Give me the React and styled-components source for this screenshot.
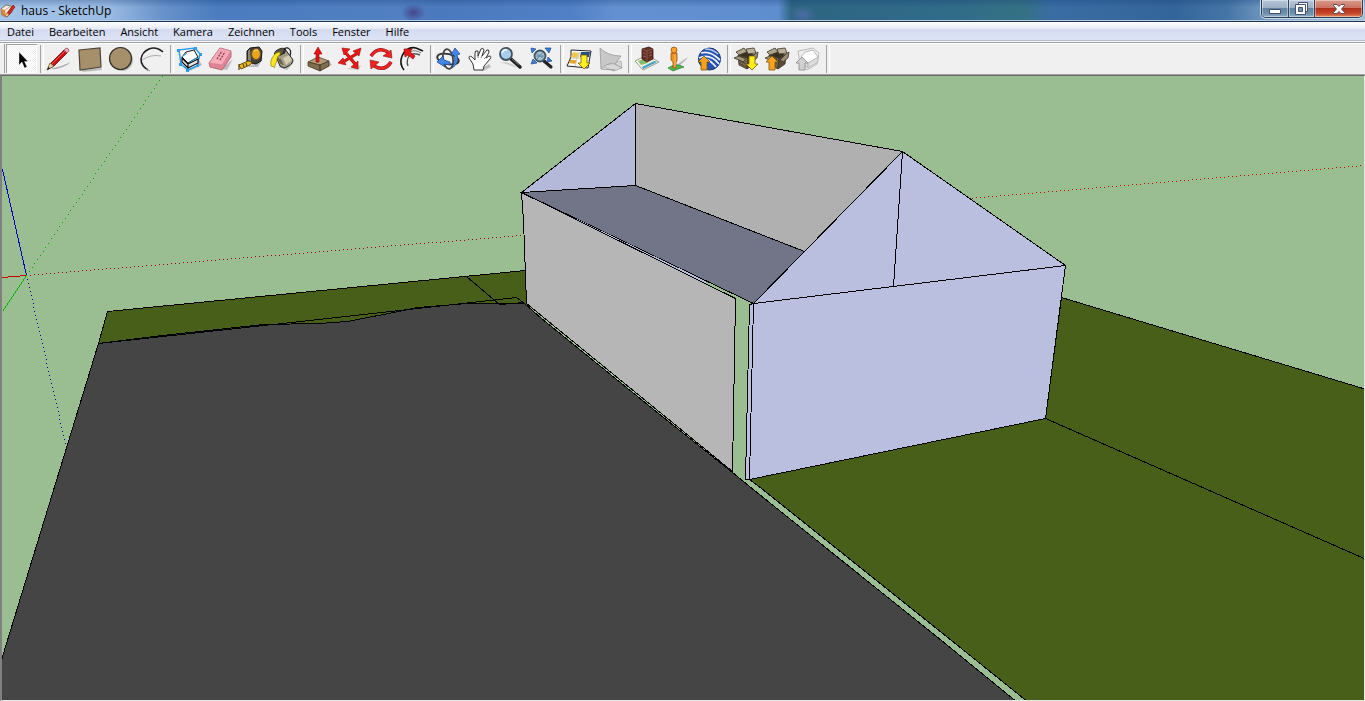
import React, { useState } from 'react';
import styled, { createGlobalStyle, css } from 'styled-components';

const GlobalStyle = createGlobalStyle`
  * {
    box-sizing: border-box;
  }

  body {
    margin: 0;
    font-family: 'Open Sans', 'Noto Sans', sans-serif;
    font-size: 11px;
    color: #000;
    background: #f0f0f0;
  }

  button {
    font: inherit;
    color: inherit;
    padding: 0;
    border: 0;
    background: none;
  }
`;

const Window = styled.div`
  display: flex;
  flex-direction: column;
  height: 100vh;
  overflow: hidden;
`;

const TitleBar = styled.header`
  display: flex;
  flex: none;
  align-items: flex-start;
  height: 22px;
  border-bottom: 1px solid #1f3553;
  box-shadow: inset 0 -1px 0 #b3cbe3;
  background:
    linear-gradient(rgba(20, 60, 120, 0.3), transparent 35%),
    radial-gradient(ellipse 12px 9px at 30.3% 60%, rgba(64, 48, 120, 0.7), transparent),
    radial-gradient(ellipse 14px 10px at 58.8% 70%, rgba(90, 110, 180, 0.7), transparent),
    linear-gradient(
      90deg,
      #a5c4e8 0%,
      #9abbe2 8%,
      #6791ca 12%,
      #4a7cbf 16%,
      #517fc1 29%,
      #4b79bd 32%,
      #5180c6 42%,
      #6390d0 45%,
      #5f8ecf 57%,
      #2d6580 58%,
      #306b88 69%,
      #347183 75%,
      #3a6da3 77%,
      #34659a 86%,
      #4676a8 90%,
      #86a9ca 94%,
      #a6c0d8 100%
    );
`;

const Title = styled.h1`
  display: flex;
  align-items: center;
  gap: 5px;
  margin: 0;
  height: 21px;
  font-size: 12px;
  font-weight: 400;
  white-space: nowrap;
`;

const WindowControls = styled.div`
  display: flex;
  height: 18px;
  margin: 0 2px 0 auto;
  border: 1px solid #2d3d52;
  border-top: 0;
  border-radius: 0 0 5px 5px;
  overflow: hidden;
  box-shadow: 0 0 0 1px #c5d8e8;
`;

const ControlButton = styled.button`
  display: flex;
  align-items: center;
  justify-content: center;
  width: ${props => (props.$close ? '48px' : '26px')};
  border-left: 1px solid #34445a;
  box-shadow: inset 0 0 0 1px rgba(255, 255, 255, 0.4);
  background: ${props => props.$close
    ? 'linear-gradient(#d99a8b, #cd7361 45%, #b02f18 50%, #c9492b 80%, #e08c65)'
    : 'linear-gradient(#b7c7d7, #9db1c6 45%, #6383a2 50%, #6e8fad 80%, #94b1c8)'};

  &:first-child {
    border-left: 0;
  }
`;

const MenuBar = styled.nav`
  display: flex;
  flex: none;
  gap: 15px;
  height: 20px;
  padding: 0 7px;
  align-items: center;
  border-bottom: 1px solid #f5f5f8;
  box-shadow: inset 0 -1px 0 #b6bccc;
  background: linear-gradient(#fff, #e6eaf5 36%, #d4dbef 37%, #dee4f6);
`;

const MenuItem = styled.button`
  height: 19px;
  line-height: 19px;
`;

const ToolBar = styled.div`
  display: flex;
  flex: none;
  height: 33px;
  padding: 1px 0 1px 4px;
  border-top: 1px solid #a0a0a0;
  border-bottom: 1px solid #a0a0a0;
  box-shadow: inset 0 1px 0 #fff;
  background: #f0f0f0;
`;

const Grip = styled.div`
  width: 2px;
  border-left: 1px solid #a0a0a0;
`;

const Separator = styled.div`
  width: 6px;
  padding-left: 3px;

  &::before {
    content: '';
    display: block;
    width: 2px;
    height: 28px;
    margin-top: 1px;
    border-left: 1px solid #a0a0a0;
    border-right: 1px solid #fff;
  }
`;

const ToolButton = styled.button`
  width: 31px;
  height: 29px;

  svg {
    display: block;
  }

  ${props => props.$active && css`
    box-shadow: inset 1px 1px 0 #a0a0a0, inset -1px -1px 0 #fff;
    background: repeating-conic-gradient(#fff 0 25%, #f0f0f0 0 50%) 0 0 / 2px 2px;
  `}
`;

const Viewport = styled.main`
  flex: 1;
  min-height: 0;
  border: solid;
  border-width: 1px 1px 1px 2px;
  border-color: #696969 #e8e8e8 #e8e8e8 #808080;
  background: #9bbd92;

  svg {
    display: block;
    width: 100%;
    height: 100%;
  }
`;

const Icon = ({ children }) => (
  <svg width="31" height="28" viewBox="0 0 31 28" fill="none" aria-hidden="true">
    {children}
  </svg>
);

const BigArrow = ({ x, y, down, fill }) => (
  <path
    transform={`translate(${x} ${y}) scale(1 ${down ? -1 : 1})`}
    d="M0-7L6-1H3V7H-3V-1H-6Z"
    fill={fill}
    stroke="#7a5a10"
    strokeWidth=".8"
  />
);

const OpenBox = () => (
  <g stroke="#3a3226" strokeWidth=".8">
    <path d="M8 10L18 13L17 24L9 20Z" fill="#75664e" />
    <path d="M18 13L25 10L24 19L17 24Z" fill="#594b37" />
    <path d="M9 10L16 7L24 10L18 13Z" fill="#39301f" />
    <path d="M6 7L14 3L17 7L9 10Z" fill="#b0a58d" />
    <path d="M16 4L24 3L26 8L18 9Z" fill="#bdb299" />
    <path d="M4 13L9 11L16 14L13 17Z" fill="#a1957c" />
    <path d="M19 15L25 9L28 7L27 13L22 17Z" fill="#9a8d73" />
    <path d="M9 15L16 19M9 18L16 22" stroke="#4b3f2e" />
  </g>
);

const icons = {
  select: <path d="M13 7V20L16 17L18.5 23L21 22L18.5 16.500H22Z" fill="#000" stroke="#fff" strokeWidth=".4" />,
  pencil: (
    <>
      <path d="M7 24Q18 22 28 17L24 20Q15 25 7 24Z" fill="#aaa" />
      <path d="M5 24L8 18L21 5L24 8L11 21Z" fill="#d01010" stroke="#521010" strokeWidth=".8" />
      <path d="M9 19L22 6" stroke="#ff5555" />
      <path d="M21 5L23 3Q26 3 26 6L24 8Z" fill="#f3a4b5" stroke="#8a5560" strokeWidth=".7" />
      <path d="M4 25L7 18L11 21Z" fill="#ecd3a0" stroke="#594426" strokeWidth=".7" />
      <path d="M4 25L5.500 22L7 23.500Z" fill="#111" />
    </>
  ),
  rectangle: (
    <>
      <path d="M7 25L27 23L28 25L9 27Z" fill="#bbb" />
      <path d="M5 5L26 3L27 22L6 25Z" fill="#a68f6b" stroke="#4c4436" strokeWidth="1.200" />
    </>
  ),
  circle: (
    <>
      <circle cx="17" cy="15" r="11" fill="#bbb" />
      <circle cx="15.500" cy="13.500" r="11" fill="#a68f6b" stroke="#37322b" strokeWidth="1.200" />
    </>
  ),
  arc: (
    <>
      <path d="M6 15Q15 9 25 11" stroke="#aaa" />
      <path d="M12 25Q5 21 5 14Q6 7 13 4Q20 1 27 7" stroke="#222" strokeWidth="1.600" />
      <path d="M10 24L14 26" stroke="#999" />
    </>
  ),
  component: (
    <>
      <path d="M6 18L16 26L29 20L25 14Z" fill="#b5b5b5" />
      <path d="M6 5L22 3L27 9L24 21L15 25L8 19Z" fill="#fff" stroke="#2c9cec" strokeWidth="1.500" />
      <path d="M9 13L15 19V23L9 17ZM15 19L25 14V18L15 23Z" fill="#e8e8e8" stroke="#111" strokeWidth="1.200" />
      <path d="M13 7L21 5L25 12L15 18L9 12Z" fill="#fff" stroke="#111" />
      <path d="M9 12L14 8M16 17L24 13" stroke="#2c9cec" />
      <path d="M4 4h3v3H4ZM21 2h3v3H21ZM26 8h3v3H26ZM23 19h3v3H23ZM13 24h3v3H13ZM6 18h3v3H6Z" fill="#2c9cec" />
    </>
  ),
  eraser: (
    <>
      <path d="M17 24L29 14L23 25Z" fill="#bbb" />
      <path d="M5 18L16 3L27 6V12L18 25L6 22Z" fill="#e28496" stroke="#a65566" strokeWidth=".8" />
      <path d="M5 18L16 3L27 6L18 20Z" fill="#f8abb8" stroke="#c67888" strokeWidth=".6" />
      <path d="M13 14L18 6M16 15L21 7" stroke="#93485a" strokeWidth="1.500" strokeDasharray="2 1" />
    </>
  ),
  tape: (
    <>
      <path d="M13 22L28 13L23 22Z" fill="#bbb" />
      <path d="M12 6L15 3L24 2L27 6L26 16L21 19L12 17Z" fill="#45413a" stroke="#191714" />
      <path d="M13 6L15 4L16 16L13 15Z" fill="#8d8673" />
      <ellipse cx="21" cy="9" rx="4.500" ry="5.500" fill="#eaa41d" stroke="#61502a" />
      <path d="M19 7Q20 4 23 5" stroke="#ffd46f" />
      <path d="M4 20L13 16L17 17L15 20L6 24Z" fill="#f4bd18" stroke="#664c0d" />
      <path d="M4 19V25M8 19L9 22M11 18L12 21" stroke="#554111" strokeWidth="1.200" />
    </>
  ),
  paint: (
    <>
      <path d="M12 22L28 17L21 25Z" fill="#bbb" />
      <path d="M9 9L19 4L27 15Q27 20 18 23L14 21Z" fill="#a39d87" stroke="#222" />
      <path d="M17 13L23 10L26 15L20 20Z" fill="#d2ccb2" />
      <path d="M11 11L15 19M14 14L17 20" stroke="#6b6553" strokeWidth="1.500" />
      <ellipse cx="14" cy="7" rx="6" ry="3" transform="rotate(-28 14 7)" fill="#5c563f" stroke="#222" />
      <path d="M18 9Q17 2 22 3Q26 5 24 11" stroke="#222" strokeWidth="1.300" />
      <path d="M14 7Q9 7 6 13Q4 17 5 21L8 22Q9 24 9 20Q11 17 11 14Q11 11 14 10Z" fill="#ffe51b" stroke="#8d8013" strokeWidth=".7" />
    </>
  ),
  push: (
    <>
      <path d="M17 26L29 20L26 16Z" fill="#bbb" />
      <path d="M5 17L15 12L26 16L17 20Z" fill="#b29c78" stroke="#50442e" strokeWidth=".8" />
      <path d="M5 17L17 20V26L5 21ZM17 20L26 16V21L17 26Z" fill="#806d4d" stroke="#463a27" strokeWidth=".8" />
      <path d="M15 2L19 9H16V17H13V9H11Z" fill="#ed1111" stroke="#8c0808" strokeWidth=".6" />
    </>
  ),
  move: (
    <>
      <path d="M12 24L27 20L25 25Z" fill="#ccc" />
      <path d="M11 7L22 20M24 8L9 17" stroke="#9e0808" strokeWidth="3.200" />
      <path d="M8 3L16 4L10 10ZM27 3L25 11L19 6ZM4 18L9 13L12 20ZM24 24L17 22L24 16Z" fill="#ee1717" stroke="#9e0808" strokeWidth=".6" />
      <path d="M11 7L22 20M24 8L9 17" stroke="#ee1717" strokeWidth="2" />
    </>
  ),
  rotate: (
    <>
      <path d="M6 11Q13 1 23 7" stroke="#8b1515" strokeWidth="3.500" />
      <path d="M6 11Q13 1 23 7" stroke="#f02222" strokeWidth="2.500" />
      <path d="M26 5L27 13L18 11Z" fill="#f02222" stroke="#8b1515" strokeWidth=".6" />
      <path d="M26 17Q20 27 9 21" stroke="#8b1515" strokeWidth="3.500" />
      <path d="M26 17Q20 27 9 21" stroke="#f02222" strokeWidth="2.500" />
      <path d="M5 15L14 17L6 24Z" fill="#f02222" stroke="#8b1515" strokeWidth=".6" />
    </>
  ),
  offset: (
    <>
      <path d="M8 25Q3 19 6 11Q11 1 20 3L27 6" stroke="#111" strokeWidth="1.600" />
      <path d="M12 21Q10 16 13 11Q16 7 24 10" stroke="#555" strokeWidth="1.400" />
      <path d="M14 7Q19 4 25 8" stroke="#777" />
      <path d="M8 4L16 4L14 7L19 11L17 14L12 10L9 12Z" fill="#ed1616" stroke="#8c0909" strokeWidth=".7" />
    </>
  ),
  orbit: (
    <>
      <ellipse cx="15" cy="14" rx="11" ry="5" transform="rotate(12 15 14)" stroke="#333" strokeWidth="1.800" />
      <ellipse cx="15" cy="14" rx="5" ry="10" transform="rotate(-8 15 14)" stroke="#444" strokeWidth="1.800" />
      <path d="M19 23Q23 17 21 10L18 10L22 3L27 9L24 10Q27 18 19 23Z" fill="#4187ec" stroke="#174283" strokeWidth=".7" />
      <path d="M4 17L10 11L11 15L17 17L17 20L11 19L12 22Z" fill="#4187ec" stroke="#174283" strokeWidth=".7" />
    </>
  ),
  pan: (
    <>
      <path d="M15 25L25 19L27 22L19 26Z" fill="#bbb" />
      <path d="M10 25L9 19L5 13Q5 10 8 12L11 15L11 8Q11 5 14 6L14 11L17 4Q19 2 20 5L18 11L23 5Q25 4 25 7L22 13L25 11Q28 11 26 14L20 21L19 25Z" fill="#fff" stroke="#333" />
      <path d="M14 11L14 13M18 11L17 13M22 12L20 14" stroke="#777" />
    </>
  ),
  zoom: (
    <>
      <path d="M5 17Q15 16 22 23L14 20Z" fill="#ccc" />
      <path d="M16 14L25 22" stroke="#222" strokeWidth="3.500" strokeLinecap="round" />
      <path d="M17 14L24 20" stroke="#777" />
      <circle cx="11" cy="9" r="6" fill="#a6cdec" stroke="#45515d" strokeWidth="1.800" />
      <path d="M7 8Q8 4 12 5" stroke="#e8f6ff" strokeWidth="2" />
    </>
  ),
  extents: (
    <>
      <path d="M18 16L25 22" stroke="#222" strokeWidth="3.200" strokeLinecap="round" />
      <circle cx="14" cy="11" r="5.500" fill="#9fc5d8" stroke="#44525d" strokeWidth="1.800" />
      <path d="M10 8L18 14M17 7L11 14M10 11H18" stroke="#668591" />
      <path d="M5 3L10 4L6 8ZM19 3L25 3L23 8ZM5 19L7 14L11 18ZM22 12L26 16L21 17Z" fill="#3b7ee2" stroke="#1b478b" strokeWidth=".7" />
    </>
  ),
  getView: (
    <>
      <path d="M8 5L28 6L25 23L4 21L8 12Z" fill="#fafafa" stroke="#222" />
      <path d="M10 7L17 8L15 14L8 12Z" fill="#f5c64d" />
      <path d="M18 7L27 7L26 12L17 12Z" fill="#244c7d" />
      <path d="M7 15L14 15L13 19L6 18Z" fill="#e8a62d" />
      <path d="M8 14Q15 11 25 16M16 7L12 21" stroke="#c9cfcb" />
      <BigArrow x={21} y={17} down fill="#ffee18" />
    </>
  ),
  terrain: (
    <>
      <path d="M7 21L27 16L28 23L20 26Z" fill="#d8d8d8" stroke="#aaa" strokeWidth=".8" />
      <path d="M6 3Q14 11 27 11L21 19Q14 17 7 24Z" fill="#c8c8c8" stroke="#999" strokeWidth=".8" />
      <path d="M21 19L28 23M7 24L21 25" stroke="#999" />
    </>
  ),
  building: (
    <>
      <path d="M4 16L16 10L28 17L12 25Z" fill="#f5f4df" stroke="#7d867f" strokeWidth=".8" />
      <path d="M7 16L13 14L17 18L10 20Z" fill="#86bd71" />
      <path d="M11 22L23 16L26 17L12 24Z" fill="#43a2c9" />
      <path d="M11 4L18 2L22 4V14L16 17L11 14Z" fill="#643229" stroke="#321812" strokeWidth=".8" />
      <path d="M11 4L16 6L22 4M16 6V17" stroke="#8a5044" />
      <path d="M12 8L15 9M12 11L15 12M18 8L21 7M18 11L21 10" stroke="#8f5548" />
    </>
  ),
  streetView: (
    <>
      <path d="M14 20L26 12L24 15L16 22Z" fill="#bbb" />
      <path d="M6 23L12 20L17 20L22 22L16 24L11 26Z" fill="#4cb84c" stroke="#277c30" strokeWidth=".7" />
      <path d="M9 8H15V16L14 17V23H11V17L9 15Z" fill="#f18e1d" stroke="#9c5713" strokeWidth=".8" />
      <path d="M13 9V22" stroke="#ffc35e" />
      <circle cx="12" cy="5" r="3" fill="#f7a32c" stroke="#9c5713" strokeWidth=".8" />
    </>
  ),
  earth: (
    <>
      <circle cx="16.500" cy="14" r="11" fill="#2551b3" stroke="#19336f" />
      <path d="M8 8Q17 5 27 15M6 13Q17 8 26 19M13 14Q18 16 23 22" stroke="#e8f2ff" strokeWidth="1.800" />
      <path d="M12 4Q20 4 25 9" stroke="#b4cdf2" strokeWidth="1.600" />
      <BigArrow x={11} y={18} fill="#fba01a" />
    </>
  ),
  getModels: (
    <>
      <OpenBox />
      <BigArrow x={22} y={18} down fill="#ffee18" />
    </>
  ),
  shareModel: (
    <>
      <OpenBox />
      <BigArrow x={11} y={18} fill="#fba01a" />
    </>
  ),
  shareComponent: (
    <g stroke="#bbb">
      <path d="M6 6L21 3L27 8L25 19L15 25L8 19Z" fill="#eee" />
      <path d="M9 13L16 18V23L9 18ZM16 18L26 12V17L16 23Z" fill="#ddd" />
      <path d="M13 7L21 5L26 12L16 18L9 12Z" fill="#fff" />
      <path d="M10 12L16 18H13V25H7V18H4Z" fill="#d0d0d0" stroke="#999" />
    </g>
  ),
};

const toolGroups = [
  [['select', 'Auswählen']],
  [['pencil', 'Linie'], ['rectangle', 'Rechteck'], ['circle', 'Kreis'], ['arc', 'Bogen']],
  [['component', 'Komponente erstellen'], ['eraser', 'Radiergummi'], ['tape', 'Maßband'], ['paint', 'Farbeimer']],
  [['push', 'Drücken/Ziehen'], ['move', 'Verschieben'], ['rotate', 'Drehen'], ['offset', 'Versatz']],
  [['orbit', 'Rotieren'], ['pan', 'Schwenken'], ['zoom', 'Zoom'], ['extents', 'Zoom Grenzen']],
  [['getView', 'Aktuelle Ansicht abrufen'], ['terrain', 'Gelände']],
  [['building', 'Gebäude'], ['streetView', 'Fototexturen'], ['earth', 'Google Earth']],
  [['getModels', 'Modelle abrufen'], ['shareModel', 'Modell freigeben'], ['shareComponent', 'Komponente freigeben']],
];

const menus = ['Datei', 'Bearbeiten', 'Ansicht', 'Kamera', 'Zeichnen', 'Tools', 'Fenster', 'Hilfe'];

const AppLogo = () => (
  <svg width="16" height="16" viewBox="0 0 16 16" aria-hidden="true">
    <path d="M1 6L6 2L11 3L12 9L7 14L2 12Z" fill="#f5f0e8" stroke="#74563e" strokeWidth=".8" />
    <path d="M1 6L5 7L6 14L2 12Z" fill="#d98635" />
    <path d="M5 7L11 3" stroke="#c9a386" />
    <path d="M5 14L7 10L13 2L15 4L9 12Z" fill="#d5271c" stroke="#671b12" strokeWidth=".6" />
    <path d="M5 14L7 10L9 12Z" fill="#f1d19a" />
  </svg>
);

// one-pixel dots every 4px along the longer direction of the line
const dots = (x1, y1, x2, y2) => {
  const count = Math.floor(Math.max(Math.abs(x2 - x1), Math.abs(y2 - y1)) / 4);
  let d = '';
  for (let i = 1; i <= count; i++) {
    const x = Math.round(x1 + ((x2 - x1) * i) / count);
    const y = Math.round(y1 + ((y2 - y1) * i) / count);
    d += `M${x - 0.5} ${y}h1`;
  }
  return d;
};

// 3D model: painted back to front, coordinates are screen pixels
const Model = () => (
  <svg
    viewBox="1.5 75.5 1362 624"
    preserveAspectRatio="xMidYMid slice"
    shapeRendering="crispEdges"
    fill="none"
    stroke="#000"
    strokeWidth="1"
    role="img"
    aria-label="Haus"
  >
    <g>
      <path d="M26 275L2 169" stroke="#0000c0" />
      <path d="M26 275L2 277" stroke="#c00000" />
      <path d="M26 275L2 311" stroke="#00b400" />
      <path d={dots(26, 275, 520, 235)} stroke="#a00000" />
      <path d={dots(968, 198, 1364, 165)} stroke="#c00000" />
      <path d={dots(26, 275, 162, 76)} stroke="#00a800" />
      <path d={dots(26, 275, 65, 443)} stroke="#0000a0" />
    </g>

    <path d="M107 311L525 270L527 304L98 343Z" fill="#475f18" stroke="none" />
    <path d="M98 343L107 311L525 270" />
    <path
      d="M98 343L162 335L263 324L318 323L347 321L393 312L417 307L467 303L524 303L541 318L658 413L732 472L754 490L941 640L1017 702H0V664L2 656Z"
      fill="#454545"
    />
    <path d="M98 343L291 322L480 301L516 297L524 303M466 276L499 304L524 302" />
    <path d="M749 479L1045 418L1061 297L1366 389V702H1028L951 640L761 488Z" fill="#475f18" />
    <path d="M1045 418L1366 559" />

    <path d="M521 192L635 103L635 185Z" fill="#b4b8d9" />
    <path d="M635 103L902 151L804 251L635 185Z" fill="#b0b0b0" />
    <path d="M521 192L635 185L804 251L753 303Z" fill="#727588" />
    <path d="M575 218L704 280L706 283L575 219Z" fill="#bbbfdf" stroke="none" />
    <path d="M521 192L735 298L732 471L526 303L523 220Z" fill="#b6b6b6" />
    <path d="M749 304L753 303L749 479L745 479Z" fill="#bbbfdf" />
    <path d="M753 303L902 151L1065 265L1045 418L749 479Z" fill="#bbbfdf" />
    <path d="M753 303L1065 265M902 151L893 286" />
  </svg>
);

const App = () => {
  const [activeTool, setActiveTool] = useState('select');

  return (
    <>
      <GlobalStyle />
      <Window>
        <TitleBar>
          <Title>
            <AppLogo />
            haus - SketchUp
          </Title>
          <WindowControls>
            <ControlButton aria-label="Minimieren">
              <svg width="12" height="12" viewBox="0 0 12 12">
                <path d="M.5 6.500H11.500V10.500H.5Z" fill="#fff" stroke="#45506a" />
              </svg>
            </ControlButton>
            <ControlButton aria-label="Verkleinern">
              <svg width="13" height="13" viewBox="0 0 13 13">
                <path d="M3.500 .5H12.500V9.500H3.500Z" fill="#fff" stroke="#45506a" />
                <path d="M.5 2.500H10.500V12.500H.5Z" fill="#fff" stroke="#45506a" />
                <path d="M3.500 5.500H7.500V9.500H3.500Z" fill="#7790ad" stroke="#45506a" />
              </svg>
            </ControlButton>
            <ControlButton $close aria-label="Schließen">
              <svg width="12" height="12" viewBox="0 0 12 12">
                <path d="M.5 1.500H4L6 3.500L8 1.500H11.500V2.500L8.500 6L11.500 9.500V10.500H8L6 8.500L4 10.500H.5V9.500L3.500 6L.5 2.500Z" fill="#fff" stroke="#54495e" />
              </svg>
            </ControlButton>
          </WindowControls>
        </TitleBar>

        <MenuBar>
          {menus.map(menu => (
            <MenuItem key={menu}>{menu}</MenuItem>
          ))}
        </MenuBar>

        <ToolBar role="toolbar">
          <Grip />
          {toolGroups.map((group, index) => (
            <React.Fragment key={index}>
              {group.map(([id, label]) => (
                <ToolButton
                  key={id}
                  aria-label={label}
                  $active={activeTool === id}
                  onClick={() => setActiveTool(id)}
                >
                  <Icon>{icons[id]}</Icon>
                </ToolButton>
              ))}
              <Separator />
            </React.Fragment>
          ))}
        </ToolBar>

        <Viewport>
          <Model />
        </Viewport>
      </Window>
    </>
  );
};

export default App;
